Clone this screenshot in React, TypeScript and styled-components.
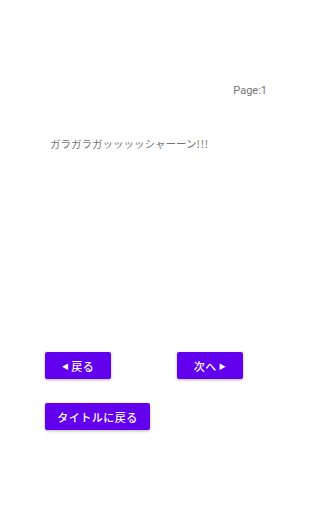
import React from "react";
import styled, { createGlobalStyle } from "styled-components";

const Global = createGlobalStyle`
  html, body { margin: 0; padding: 0; background: #fff; }
  body { font-family: Roboto, "Noto Sans CJK JP", sans-serif; }
`;

const Screen = styled.div`
  width: 288px;
  height: 512px;
  box-sizing: border-box;
  padding: 83px 0 0 45px;
  display: flex;
  flex-direction: column;
`;

const PageLabel = styled.div`
  align-self: flex-end;
  padding-right: 21px;
  font-size: 11px;
  line-height: 16px;
  color: #757575;
`;

const Message = styled.div`
  margin-top: 37px;
  padding-left: 5px;
  font-family: "Noto Sans CJK JP", sans-serif;
  font-size: 10.5px;
  line-height: 16px;
  color: #757575;
`;

const Bang = styled.span`
  letter-spacing: 0.8px;
`;

const NavRow = styled.div`
  margin-top: 200px;
  display: grid;
  grid-template-columns: 132px 132px;
`;

const Button = styled.button<{ $w: number }>`
  width: ${(p) => p.$w}px;
  height: 27px;
  padding: 0;
  border: none;
  border-radius: 2px;
  background: #6200ee;
  color: #fff;
  font-family: Roboto, "Noto Sans CJK JP", sans-serif;
  font-size: 11px;
  font-weight: 500;
  letter-spacing: 0.5px;
  box-shadow: 0 1px 3px rgba(0, 0, 0, 0.3);
  display: flex;
  align-items: center;
  justify-content: center;
  gap: 2px;
`;

const Arrow = styled.span`
  font-size: 7px;
`;

const TitleRow = styled.div`
  margin-top: 24px;
`;

export default function App() {
  return (
    <>
      <Global />
      <Screen>
        <PageLabel>Page:1</PageLabel>
        <Message>
          ガラガラガッッッッシャーーン<Bang>!!!</Bang>
        </Message>
        <NavRow>
          <Button $w={66}>
            <Arrow>◀</Arrow>戻る
          </Button>
          <Button $w={66}>
            次へ<Arrow>▶</Arrow>
          </Button>
        </NavRow>
        <TitleRow>
          <Button $w={105}>タイトルに戻る</Button>
        </TitleRow>
      </Screen>
    </>
  );
}
